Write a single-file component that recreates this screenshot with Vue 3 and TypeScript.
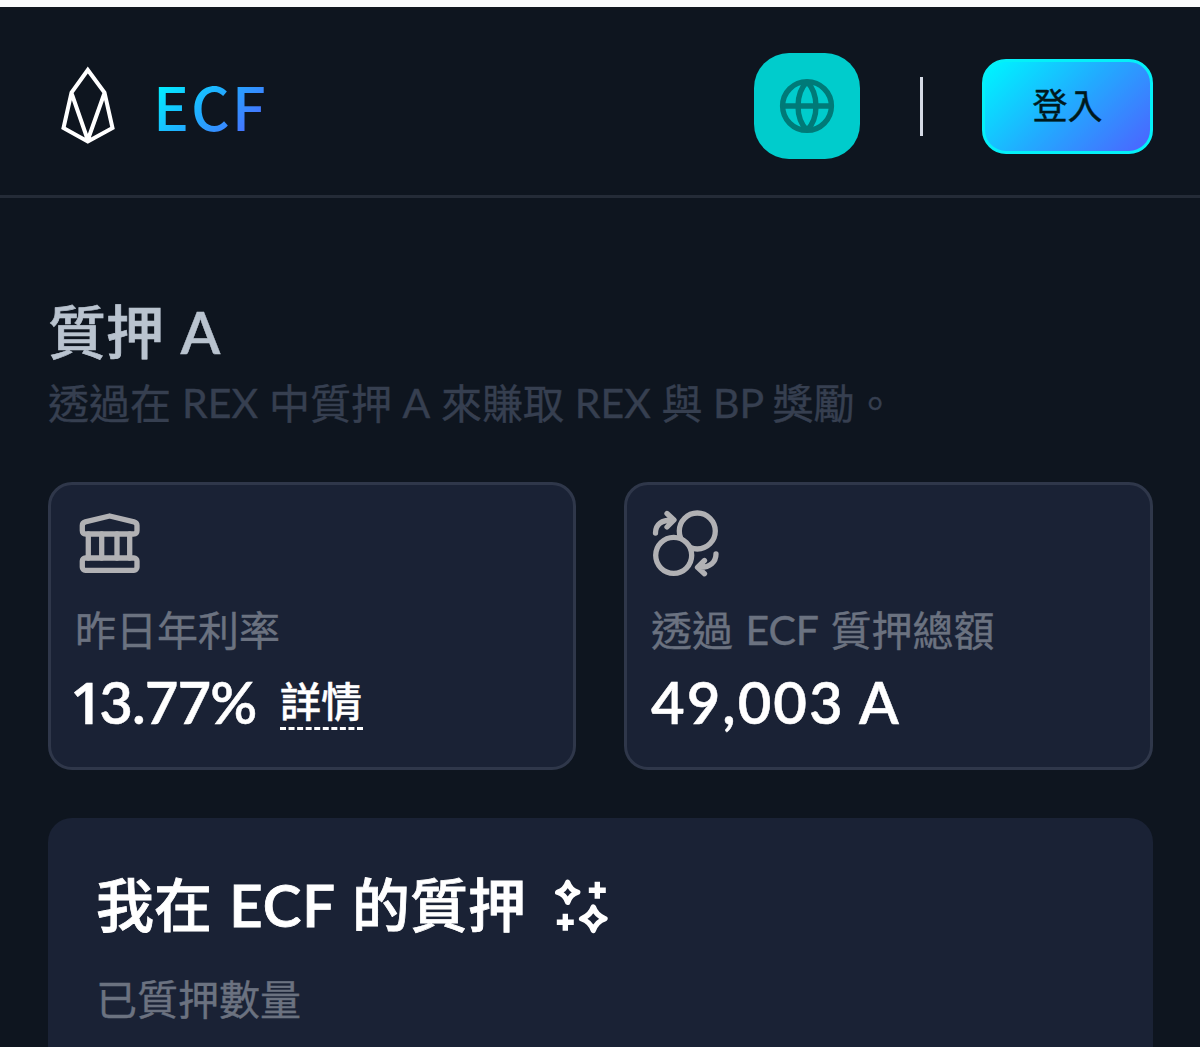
<script setup lang="ts">
interface Run {
  text: string
  width?: number
}

const intro: Run[] = [
  { text: '透過在' },
  { text: ' REX ', width: 98 },
  { text: '中質押' },
  { text: ' A ', width: 49 },
  { text: '來賺取' },
  { text: ' REX ', width: 97.5 },
  { text: '與' },
  { text: ' BP ', width: 70 },
  { text: '獎勵。' },
]

const totalLabel: Run[] = [
  { text: '透過' },
  { text: ' ECF ', width: 97.5 },
  { text: '質押總額' },
]
</script>

<template>
  <div class="page">
    <header class="header">
      <div class="brand">
        <svg class="logo" viewBox="0 0 60 84" aria-hidden="true">
          <path d="M29.8 7 13.5 29.5 5.5 65l24.3 13.500L54.500 65l-8-35.500zM13.500 30l16.300 47L46.500 30" />
        </svg>
        <span class="wordmark">ECF</span>
      </div>
      <nav class="actions">
        <button class="lang" aria-label="語言">
          <svg viewBox="-30 -30 60 60">
            <circle r="24.400" />
            <path d="M-24.400 0H24.400M0-24.400C-12-12-12 12 0 24.400M0-24.400C12-12 12 12 0 24.400" />
          </svg>
        </button>
        <span class="divider"></span>
        <button class="login">登入</button>
      </nav>
    </header>

    <main class="main">
      <h1 class="title">質押<span class="latin title-a"> A</span></h1>
      <p class="intro">
        <span v-for="(run, i) in intro" :key="i" :class="{ latin: run.width, slot: run.width }"
          :style="run.width ? { width: run.width + 'px' } : undefined">{{ run.text }}</span>
      </p>

      <section class="cards">
        <article class="card">
          <svg class="icon bank" viewBox="0 0 66 66">
            <path d="M6.300 20.500v-5q0-2.800 3-3.600L33.600 6l24.400 5.900q3 .8 3 3.600v5q0 3.500-3.500 3.500H9.800q-3.500 0-3.500-3.500z" />
            <path d="M12.300 24v24M25.700 24v24M41 24v24M53.700 24v24" />
            <rect x="6.300" y="48" width="54.700" height="12.300" rx="3" />
          </svg>
          <div class="label">昨日年利率</div>
          <div class="value">
            <span class="number rate"><span class="lead">1</span>3.77%</span><a class="details">詳情</a>
          </div>
        </article>
        <article class="card">
          <svg class="icon swap" viewBox="0 0 72 72">
            <circle cx="47.300" cy="23" r="18" />
            <circle class="front" cx="23.700" cy="47.300" r="18" />
            <path d="M5.500 25C5.500 16 12 12 22 12M17 5.500l7 6.500-7 7M66 46c0 8-6 13.500-16 13.300M54.500 52.500l-7 6.800 7 6.500" />
          </svg>
          <div class="label">
            <span v-for="(run, i) in totalLabel" :key="i" :class="{ latin: run.width, slot: run.width }"
              :style="run.width ? { width: run.width + 'px' } : undefined">{{ run.text }}</span>
          </div>
          <div class="value"><span class="number total">49,003 A</span></div>
        </article>
      </section>

      <section class="panel">
        <h2 class="heading">
          <span>我在</span><span class="latin heading-latin"> ECF </span><span>的質押</span>
          <svg class="sparkles" viewBox="0 0 64 64">
            <path d="M17.700 7.300q2.500 7.500 10 10-7.500 2.500-10 10-2.500-7.500-10-10 7.500-2.500 10-10z" />
            <path d="M43.300 32q3 8.700 11.700 11.700-8.700 3-11.700 11.700-3-8.700-11.700-11.700 8.700-3 11.700-11.700z" />
            <path d="M47.300 6.800v17M38.800 15.300h17M15.300 38.800v17M6.800 47.300h17" />
          </svg>
        </h2>
        <div class="label amount">已質押數量</div>
      </section>
    </main>
  </div>
</template>

<style>
body {
  margin: 0;
  background: #0e151f;
}
</style>

<style scoped>
.page {
  box-sizing: border-box;
  height: 1047px;
  overflow: hidden;
  border-top: 7px solid #f9fafc;
  background: #0e151f;
  color: #fff;
  font-family: "Noto Sans CJK TC", sans-serif;
}
.header {
  box-sizing: border-box;
  height: 191px;
  padding: 0 47px 0 58px;
  border-bottom: 3px solid #242b37;
  display: flex;
  justify-content: space-between;
}
.brand {
  display: flex;
  align-items: flex-start;
}
.logo {
  width: 60px;
  height: 84px;
  margin-top: 56px;
  fill: none;
  stroke: #fff;
  stroke-width: 4;
  stroke-miterlimit: 2.2;
}
.wordmark {
  margin: 53px 0 0 35px;
  font-size: 60px;
  line-height: 90px;
  font-weight: 500;
  letter-spacing: 2px;
  background: linear-gradient(135deg, #00f0ff 15%, #22aaff 50%, #5162ff 90%);
  background-clip: text;
  -webkit-background-clip: text;
  color: transparent;
}
.actions {
  display: flex;
  align-items: center;
  height: 198px;
}
button {
  padding: 0;
  border: 0;
  font: inherit;
}
.lang {
  display: grid;
  place-items: center;
  width: 106px;
  height: 106px;
  border-radius: 35px;
  background: #00cccc;
}
.lang svg {
  width: 60px;
  height: 60px;
  fill: none;
  stroke: #007a78;
  stroke-width: 5.4;
}
.divider {
  width: 3px;
  height: 59px;
  margin: 0 59px 0 60px;
  background: #d5dae5;
}
.login {
  box-sizing: border-box;
  width: 171px;
  height: 95px;
  border: 3px solid #05f0f8;
  border-radius: 24px;
  background: linear-gradient(135deg, #00f0ff 5%, #22aaff 50%, #4b65ff 98%);
  color: #00191c;
  font-size: 35px;
  line-height: 83px;
  padding-bottom: 6px;
  -webkit-text-stroke: 0.4px;
}
.main {
  padding: 96px 47px 0 48px;
}
.title {
  margin: 0;
  font-size: 58px;
  line-height: 70px;
  font-weight: 500;
  color: #b9c3cf;
  height: 70px;
  -webkit-text-stroke: 0.7px;
}
.latin,
.number {
  font-family: Lato, "Noto Sans CJK TC", sans-serif;
  white-space: pre;
}
.title-a {
  margin-left: 2px;
  font-weight: 600;
  -webkit-text-stroke: 0.4px;
}
.slot {
  display: inline-block;
  text-align: center;
}
.intro {
  display: flex;
  height: 60px;
  margin: 7px 0 0;
  font-size: 41px;
  line-height: 60px;
  color: #363f50;
  -webkit-text-stroke: 0.4px;
}
.intro .slot,
.label .slot {
  padding-top: 2px;
}
.cards {
  display: grid;
  grid-template-columns: 528px 529px;
  gap: 48px;
  margin-top: 51px;
}
.card {
  box-sizing: border-box;
  height: 288px;
  padding: 25px 24px;
  border: 3px solid #2f374a;
  border-radius: 24px;
  background: #1a2235;
}
.icon {
  display: block;
  fill: none;
  stroke: #b1b1b4;
  stroke-width: 5.3;
  stroke-linecap: round;
  stroke-linejoin: round;
}
.bank {
  width: 66px;
  height: 66px;
  margin-left: 0.5px;
}
.swap {
  width: 72px;
  height: 72px;
  margin: -2px 0 -4px -1px;
}
.front {
  fill: #1a2235;
}
.label {
  display: flex;
  height: 60px;
  margin-top: 22px;
  font-size: 41px;
  line-height: 60px;
  color: #6b7280;
  -webkit-text-stroke: 0.4px;
}
.value {
  display: flex;
  align-items: center;
  height: 80px;
  margin-top: 4px;
}
.number {
  font-size: 58px;
  line-height: 80px;
  font-weight: 600;
  -webkit-text-stroke: 0.5px;
}
.rate {
  width: 210px;
  margin-left: -5px;
  letter-spacing: -0.9px;
}
.lead {
  font-family: "Open Sans", Lato, sans-serif;
  letter-spacing: -4px;
  line-height: 1;
}
.total {
  letter-spacing: 2px;
}
.details {
  width: 83px;
  font-size: 41px;
  line-height: 49px;
  padding-bottom: 3px;
  font-weight: 500;
  border-bottom: 3px dashed #fff;
  -webkit-text-stroke: 0.4px;
}
.panel {
  height: 280px;
  margin-top: 48px;
  padding: 44px 48px;
  border-radius: 24px;
  background: #1a2235;
}
.heading {
  display: flex;
  height: 80px;
  margin: 0;
  font-size: 58px;
  line-height: 80px;
  font-weight: 500;
  -webkit-text-stroke: 0.8px;
}
.heading-latin {
  width: 140px;
  padding-top: 3px;
  text-align: center;
  font-weight: 600;
  letter-spacing: 1px;
}
.sparkles {
  width: 64px;
  height: 64px;
  margin: 13px 0 0 24px;
  fill: none;
  stroke: #fff;
  stroke-width: 5.4;
  stroke-linejoin: round;
}
.amount {
  margin-top: 25px;
}
</style>
